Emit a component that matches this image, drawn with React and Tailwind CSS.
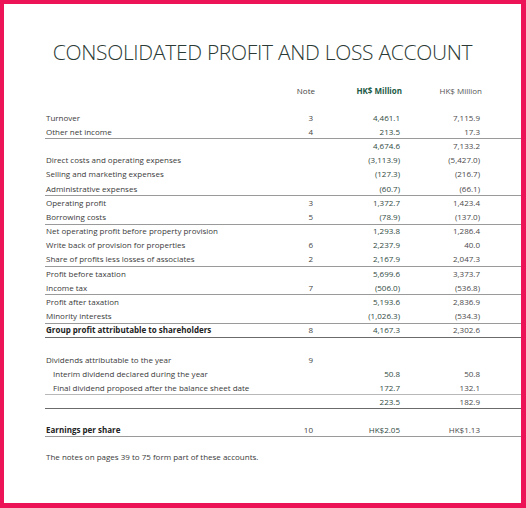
const rows = [
  { label: 'Turnover', note: '3', a: '4,461.1', b: '7,115.9' },
  { label: 'Other net income', note: '4', a: '213.5', b: '17.3', line: 'gray' },
  { label: '', note: '', a: '4,674.6', b: '7,133.2' },
  { label: 'Direct costs and operating expenses', note: '', a: '(3,113.9)', b: '(5,427.0)' },
  { label: 'Selling and marketing expenses', note: '', a: '(127.3)', b: '(216.7)' },
  { label: 'Administrative expenses', note: '', a: '(60.7)', b: '(66.1)', line: 'gray' },
  { label: 'Operating profit', note: '3', a: '1,372.7', b: '1,423.4' },
  { label: 'Borrowing costs', note: '5', a: '(78.9)', b: '(137.0)', line: 'gray' },
  { label: 'Net operating profit before property provision', note: '', a: '1,293.8', b: '1,286.4' },
  { label: 'Write back of provision for properties', note: '6', a: '2,237.9', b: '40.0' },
  { label: 'Share of profits less losses of associates', note: '2', a: '2,167.9', b: '2,047.3', line: 'gray' },
  { label: 'Profit before taxation', note: '', a: '5,699.6', b: '3,373.7' },
  { label: 'Income tax', note: '7', a: '(506.0)', b: '(536.8)', line: 'gray' },
  { label: 'Profit after taxation', note: '', a: '5,193.6', b: '2,836.9' },
  { label: 'Minority interests', note: '', a: '(1,026.3)', b: '(534.3)', line: 'gray' },
  { label: 'Group profit attributable to shareholders', note: '8', a: '4,167.3', b: '2,302.6', line: 'dark', bold: true },
]

const dividends = [
  { label: 'Dividends attributable to the year', note: '9', a: '', b: '' },
  { label: 'Interim dividend declared during the year', note: '', a: '50.8', b: '50.8', indent: true },
  { label: 'Final dividend proposed after the balance sheet date', note: '', a: '172.7', b: '132.1', indent: true, line: 'light' },
  { label: '', note: '', a: '223.5', b: '182.9', line: 'dark' },
]

function Row({ label, note, a, b, line, bold, indent, tall }) {
  const border =
    line === 'dark'
      ? 'border-[#6b6b6b]'
      : line === 'gray'
      ? 'border-[#9a9a9a]'
      : line === 'light'
      ? 'border-[#b8b8b8]'
      : 'border-transparent'

  return (
    <div className={`grid grid-cols-[228px_40px_87px_80px] ${tall ? 'h-[14.2px]' : 'h-[14px]'} items-center border-b ${border} text-[8px] leading-none`}>
      <span className={`${indent ? 'pl-[8px]' : 'pl-px'} ${bold ? 'font-bold text-[#222]' : 'text-[#3a3a3a]'} whitespace-nowrap`}>
        {label}
      </span>
      <span className="text-right text-[#444]">{note}</span>
      <span className="text-right text-[#2f4a41]">{a}</span>
      <span className="text-right text-[#4a4a4a]">{b}</span>
    </div>
  )
}

export default function App() {
  return (
    <div
      className="w-[526px] h-[508px] bg-white border-[#ec1456] border-t-4 border-l-4 border-r-[5px] border-b-[5px]"
      style={{ fontFamily: '"Open Sans", "Liberation Sans", sans-serif' }}
    >
      <h1 className="pt-[35px] text-center text-[21px] font-light leading-[26px] text-[#2b3a35] tracking-[-0.3px]">
        CONSOLIDATED PROFIT AND LOSS ACCOUNT
      </h1>

      <div className="pl-[41px] pt-[19px]">
        <div className="grid grid-cols-[228px_42px_87px_80px] h-[14px] items-center text-[8px] leading-none">
          <span />
          <span className="text-right text-[#444]">Note</span>
          <span className="text-right font-bold text-[#1d5a46]">HK$ Million</span>
          <span className="text-right text-[#555]">HK$ Million</span>
        </div>

        <div className="pt-[13px]">
          {rows.map((r, i) => (
            <Row key={i} tall {...r} />
          ))}
        </div>

        <div className="pt-[15px]">
          {dividends.map((r, i) => (
            <Row key={i} {...r} />
          ))}
        </div>

        <div className="pt-[14px]">
          <Row label="Earnings per share" note="10" a="HK$2.05" b="HK$1.13" line="gray" bold />
        </div>

        <p className="pt-[14px] pl-px text-[8px] text-[#3a3a3a]">
          The notes on pages 39 to 75 form part of these accounts.
        </p>
      </div>
    </div>
  )
}
